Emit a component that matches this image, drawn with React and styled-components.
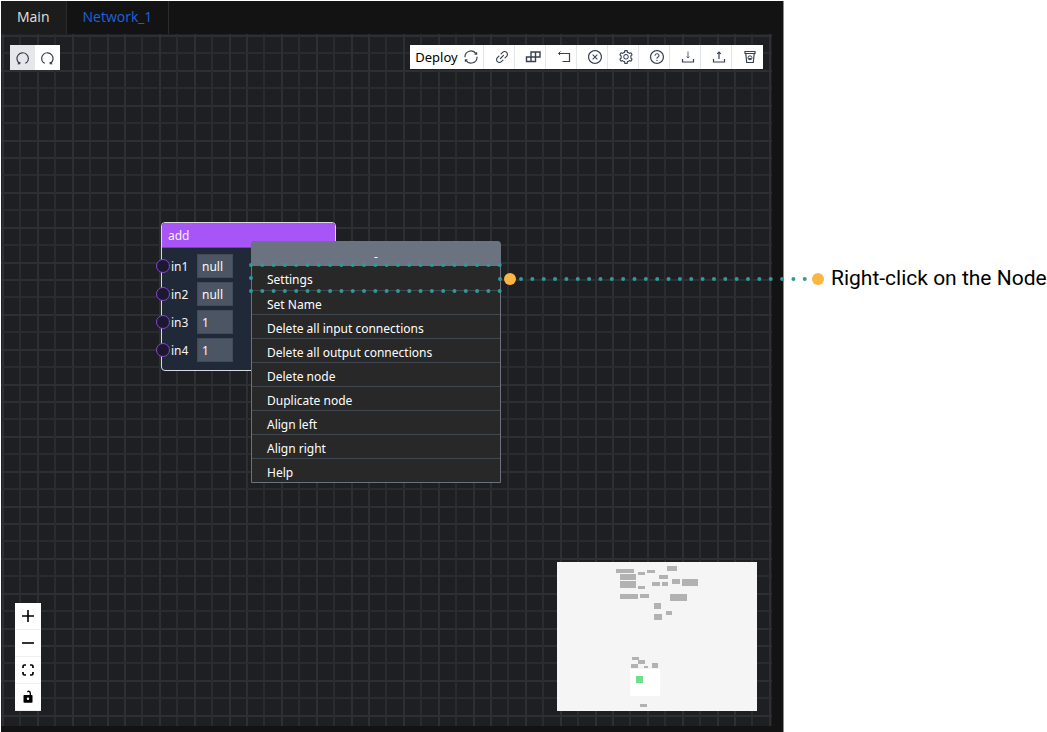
import React from "react";
import styled, { createGlobalStyle } from "styled-components";
import {
  AiOutlineLink,
  AiOutlineCloseCircle,
  AiOutlineSetting,
  AiOutlineQuestionCircle,
} from "react-icons/ai";

const GlobalStyle = createGlobalStyle`
  *, *::before, *::after { box-sizing: border-box; }
  body {
    margin: 0;
    background: #fff;
    font-family: "Noto Sans", "Open Sans", sans-serif;
    font-size: 12px;
  }
  button, input { font: inherit; }
`;

const Page = styled.div`
  position: relative;
  display: grid;
  grid-template-columns: minmax(0, 1fr) 263px;
  min-height: 100vh;
  padding: 1px 0 0 1px;
`;

const Editor = styled.main`
  display: flex;
  flex-direction: column;
  padding: 0 11px 6px 0;
  background: #131313;
  border-right: 1px solid #8c8c8c;
`;

const TabBar = styled.nav`
  display: flex;
  height: 33px;
`;

const Tab = styled.button`
  padding: 0 16px 2px;
  border: 0;
  border-right: 1px solid #2c2c2e;
  background: ${(p) => (p.$current ? "#1c1c1c" : "#131313")};
  color: ${(p) => (p.$current ? "#e2e0dc" : "#1d63dc")};
  font-family: "Open Sans", "Noto Sans", sans-serif;
  font-size: 14px;
  line-height: 30px;
`;

const Canvas = styled.section`
  position: relative;
  display: flex;
  flex: 1;
  flex-direction: column;
  justify-content: space-between;
  padding: 11px 15px 15px 14px;
  background: #1e1f23;
`;

const GridLines = styled.svg`
  position: absolute;
  inset: 0;
  width: 100%;
  height: 100%;
`;

const TopRow = styled.div`
  position: relative;
  display: flex;
  justify-content: space-between;
  align-items: flex-start;
  margin: 0 -6px 0 -5px;
`;

const BottomRow = styled.div`
  position: relative;
  display: flex;
  justify-content: space-between;
  align-items: flex-end;
`;

const History = styled.div`
  display: flex;
`;

const HistoryButton = styled.button`
  display: grid;
  place-items: center;
  width: 25px;
  height: 25px;
  padding: 0;
  border: 0;
  background: ${(p) => (p.disabled ? "#e5e7eb" : "#fff")};
  color: #374151;
`;

const Toolbar = styled.div`
  display: flex;
  height: 24px;
  background: #fff;
`;

const ToolButton = styled.button`
  display: flex;
  align-items: center;
  justify-content: center;
  gap: 6px;
  width: ${(p) => (p.$wide ? "74px" : "31px")};
  padding: 0 0 0 ${(p) => (p.$wide ? "0" : "6px")};
  border: 0;
  border-right: 1px solid #e5e7eb;
  background: transparent;
  color: #000;
  font-size: 13px;
  line-height: 24px;

  &:last-child {
    border-right-color: transparent;
  }

  svg {
    flex: none;
    color: #374151;
  }
`;

const ZoomControls = styled.div`
  display: flex;
  flex-direction: column;
  width: 26px;
  background: #fff;
`;

const ZoomButton = styled.button`
  display: grid;
  place-items: center;
  height: 27px;
  padding: 0;
  border: 0;
  border-bottom: 1px solid #eee;
  background: transparent;
  color: #000;
`;

const MiniMap = styled.svg`
  display: block;
  width: 200px;
  height: 149px;
  background: #f5f5f5;
`;

const Node = styled.article`
  position: absolute;
  left: 160px;
  top: 188px;
  width: 175px;
  border: 1px solid #d8dade;
  border-radius: 4px;
  background: #1f2937;
  color: #f3f4f6;
`;

const NodeHeader = styled.header`
  height: 25px;
  padding: 0 6px;
  border-bottom: 1px solid #7e3bc4;
  border-radius: 3px 3px 0 0;
  background: #a855f7;
  line-height: 25px;
`;

const Ports = styled.div`
  display: grid;
  gap: 4px;
  padding: 6px 0 8px;
`;

const Port = styled.div`
  display: flex;
  align-items: center;
  height: 24px;
`;

const Handle = styled.span`
  flex: none;
  width: 14px;
  height: 14px;
  margin-left: -6px;
  border: 1px solid #8a46d0;
  border-radius: 50%;
  background: #1b1830;
`;

const PortLabel = styled.label`
  width: 27px;
  padding-left: 1px;
`;

const PortInput = styled.input`
  width: 36px;
  height: 24px;
  padding: 0 4px;
  border: 1px solid #414b5a;
  outline: 0;
  background: #4b5563;
  color: #f9fafb;
`;

const Menu = styled.div`
  position: absolute;
  left: 250px;
  top: 207px;
  width: 250px;
  border: 1px solid #6b7280;
  border-radius: 3px 3px 0 0;
  background: #282828;
  color: #fff;
`;

const MenuTitle = styled.div`
  height: 24px;
  background: #6b7280;
  line-height: 30px;
  text-align: center;
`;

const MenuItem = styled.button`
  position: relative;
  display: block;
  width: 100%;
  height: ${(p) => (p.$marked ? "25px" : "24px")};
  padding: ${(p) => (p.$marked ? "3px" : "4px")} 15px 0;
  border: 0;
  border-bottom: 1px solid #414750;
  background: transparent;
  color: #fff;
  line-height: 19px;
  text-align: left;

  &:last-child {
    height: 23px;
    border-bottom: 0;
  }
`;

const MarkerOutline = styled.svg`
  position: absolute;
  left: -4px;
  top: -4px;
  width: 256px;
  height: 32px;
  pointer-events: none;
`;

const Connector = styled.div`
  position: absolute;
  left: 504px;
  right: 223px;
  top: 272px;
  display: flex;
  align-items: center;
  justify-content: space-between;
  pointer-events: none;
`;

const Dots = styled.svg`
  flex: 1;
  height: 14px;
`;

const Pin = styled.span`
  flex: none;
  width: 12px;
  height: 12px;
  border-radius: 50%;
  background: #fbb540;
`;

const Notes = styled.aside`
  padding: 264px 0 0 47px;
`;

const Note = styled.p`
  margin: 0;
  color: #000;
  font-family: Roboto, sans-serif;
  font-size: 21px;
  line-height: 26px;
  white-space: nowrap;
`;

const Icon = ({ size = 16, children, width = 1 }) => (
  <svg
    width={size}
    height={size}
    viewBox={`0 0 ${size} ${size}`}
    fill="none"
    stroke="currentColor"
    strokeWidth={width}
    aria-hidden="true"
  >
    {children}
  </svg>
);

const UndoIcon = () => (
  <Icon size={14} width={1.2}>
    <path d="M3.2 12A5.7 5.7 0 1 1 10.6 11.6L9.2 12.2" />
    <path d="M1.8 12.9H4V11z" fill="currentColor" strokeWidth="0.8" />
  </Icon>
);

const RedoIcon = () => (
  <Icon size={14} width={1.2}>
    <path d="M9.8 12A5.7 5.7 0 1 0 2.4 11.6L3.8 12.2" />
    <path d="M11.2 12.9H9V11z" fill="currentColor" strokeWidth="0.8" />
  </Icon>
);

const SyncIcon = () => (
  <Icon size={14} width={1.2}>
    <path d="M1 7.3A6 6 0 0 1 12 3.7M13 6.7A6 6 0 0 1 2 10.3" />
    <path d="M12.6 2.2V4.2H10.6M1.4 11.8V9.8H3.4" />
  </Icon>
);

const BlocksIcon = () => (
  <Icon>
    <path d="M6 3h9v5H6zM1.500 8h9v4.500h-9zM10.500 3v5M6 8v4.500" strokeWidth="1.4" />
  </Icon>
);

const ReturnIcon = () => (
  <Icon>
    <path d="M2.500 4.500h11v8H6.500" strokeWidth="1.2" />
    <path d="M4.500 2.500l-2 2 1.500 1.500" />
  </Icon>
);

const DownloadIcon = () => (
  <Icon>
    <path d="M2.5 10v3h11V10" strokeWidth="1.2" />
    <path d="M8 2.5v6.5M6.5 7.5L8 9l1.5-1.5" opacity="0.8" />
  </Icon>
);

const UploadIcon = () => (
  <Icon>
    <path d="M2.5 10v3h11V10" strokeWidth="1.2" />
    <path d="M8 10V3M6.2 4.8L8 3l1.8 1.8" strokeWidth="1.2" />
  </Icon>
);

const BinIcon = () => (
  <Icon size={14}>
    <path d="M2 1.5h10v2H2zM2.8 3.5l.9 9h6.600l.9-9" strokeWidth="1.2" />
    <circle cx="7" cy="7.8" r="2" />
    <path d="M6 8.5h2" />
  </Icon>
);

const PlusIcon = () => (
  <Icon width={1.6}>
    <path d="M8 2v12M2 8h12" />
  </Icon>
);

const MinusIcon = () => (
  <Icon width={1.6}>
    <path d="M2 8h12" />
  </Icon>
);

const FitIcon = () => (
  <Icon size={14} width={1.7}>
    <path d="M2 5V3.5Q2 2 3.5 2H5M9 2h1.5Q12 2 12 3.5V5M12 9v1.5Q12 12 10.5 12H9M5 12H3.5Q2 12 2 10.5V9" />
  </Icon>
);

const UnlockIcon = () => (
  <Icon size={14}>
    <path d="M3.3 5h7.4q.8 0 .8.8v6.2q0 .8-.8.8H3.3q-.8 0-.8-.8V5.8Q2.5 5 3.3 5z" fill="currentColor" stroke="none" />
    <path d="M9.3 5V3.5Q9.3 1.2 7.5 1.2L6.3 1.8" strokeWidth="1.3" />
    <circle cx="7" cy="8.8" r="1.2" fill="#fff" stroke="none" />
  </Icon>
);

const tools = [
  ["Copy link", <AiOutlineLink size={16} />],
  ["Arrange blocks", <BlocksIcon />],
  ["Step back", <ReturnIcon />],
  ["Cancel", <AiOutlineCloseCircle size={16} />],
  ["Preferences", <AiOutlineSetting size={16} />],
  ["Support", <AiOutlineQuestionCircle size={16} />],
  ["Download", <DownloadIcon />],
  ["Upload", <UploadIcon />],
  ["Clear", <BinIcon />],
];

const zoomTools = [
  ["Zoom in", <PlusIcon />],
  ["Zoom out", <MinusIcon />],
  ["Fit view", <FitIcon />],
  ["Toggle lock", <UnlockIcon />],
];

const ports = [
  ["in1", "null"],
  ["in2", "null"],
  ["in3", "1"],
  ["in4", "1"],
];

const menuItems = [
  "Settings",
  "Set Name",
  "Delete all input connections",
  "Delete all output connections",
  "Delete node",
  "Duplicate node",
  "Align left",
  "Align right",
  "Help",
];

// x, y, width, height of every node on the minimap
const mapNodes = [
  [59, 7, 18, 4], [63, 12, 16, 6], [63, 19, 16, 7], [81, 10, 7, 3],
  [81, 24, 7, 3], [90, 8, 8, 3], [110, 4, 10, 5], [102, 13, 9, 4],
  [95, 20, 8, 4], [105, 20, 6, 4], [115, 17, 8, 5], [125, 17, 16, 7],
  [63, 32, 18, 5], [83, 32, 9, 4], [113, 32, 17, 7], [97, 41, 7, 6],
  [109, 49, 6, 4], [97, 52, 8, 6], [75, 95, 7, 3], [81, 98, 7, 4],
  [74, 102, 7, 4], [87, 104, 4, 2], [95, 101, 6, 5], [83, 142, 7, 3],
];

const gridStops = [2, 19, 37, 54, 72, 89, 107];

function CanvasGrid() {
  return (
    <GridLines aria-hidden="true">
      <defs>
        <pattern id="grid" width="122" height="122" patternUnits="userSpaceOnUse">
          {gridStops.map((at, i) => (
            <g key={at} stroke={i % 2 ? "#2a2b2f" : "#2e2f33"} strokeWidth="2">
              <path d={`M${at} 0V122`} />
              <path d={`M0 ${at}H122`} />
            </g>
          ))}
        </pattern>
      </defs>
      <rect width="100%" height="100%" fill="url(#grid)" />
    </GridLines>
  );
}

export default function App() {
  return (
    <Page>
      <GlobalStyle />
      <Editor>
        <TabBar>
          <Tab $current>Main</Tab>
          <Tab>Network_1</Tab>
        </TabBar>
        <Canvas>
          <CanvasGrid />
          <TopRow>
            <History>
              <HistoryButton aria-label="Undo" disabled><UndoIcon /></HistoryButton>
              <HistoryButton aria-label="Redo"><RedoIcon /></HistoryButton>
            </History>
            <Toolbar>
              <ToolButton $wide>Deploy<SyncIcon /></ToolButton>
              {tools.map(([name, icon]) => (
                <ToolButton key={name} aria-label={name}>{icon}</ToolButton>
              ))}
            </Toolbar>
          </TopRow>
          <BottomRow>
            <ZoomControls>
              {zoomTools.map(([name, icon]) => (
                <ZoomButton key={name} aria-label={name}>{icon}</ZoomButton>
              ))}
            </ZoomControls>
            <MiniMap viewBox="0 0 200 149" aria-hidden="true">
              <rect x="73" y="107" width="30" height="27" fill="#fff" />
              <rect x="79" y="114" width="7" height="7" fill="#6fe08a" />
              {mapNodes.map(([x, y, w, h]) => (
                <rect key={`${x}-${y}`} x={x} y={y} width={w} height={h} fill="#b2b2b2" />
              ))}
            </MiniMap>
          </BottomRow>
          <Node>
            <NodeHeader>add</NodeHeader>
            <Ports>
              {ports.map(([name, value]) => (
                <Port key={name}>
                  <Handle />
                  <PortLabel htmlFor={name}>{name}</PortLabel>
                  <PortInput id={name} defaultValue={value} />
                </Port>
              ))}
            </Ports>
          </Node>
          <Menu>
            <MenuTitle>-</MenuTitle>
            {menuItems.map((item, i) => (
              <MenuItem key={item} $marked={i === 0}>
                {item}
                {i === 0 && (
                  <MarkerOutline viewBox="0 0 256 32" aria-hidden="true">
                    <g stroke="#2f9a98" strokeWidth="4" strokeLinecap="round" fill="none">
                      <path d="M3 3H263" pathLength="23" strokeDasharray="0 1" />
                      <path d="M3 29H263" pathLength="23" strokeDasharray="0 1" />
                      <path d="M3 16h0M252 17h0" />
                    </g>
                  </MarkerOutline>
                )}
              </MenuItem>
            ))}
          </Menu>
        </Canvas>
      </Editor>
      <Notes>
        <Note>Right-click on the Node</Note>
      </Notes>
      <Connector aria-hidden="true">
        <Pin />
        <Dots>
          <line x1="5" y1="7" x2="100%" y2="7" stroke="#2f9a98" strokeWidth="4" strokeLinecap="round" strokeDasharray="0 11.35" />
        </Dots>
        <Pin />
      </Connector>
    </Page>
  );
}
